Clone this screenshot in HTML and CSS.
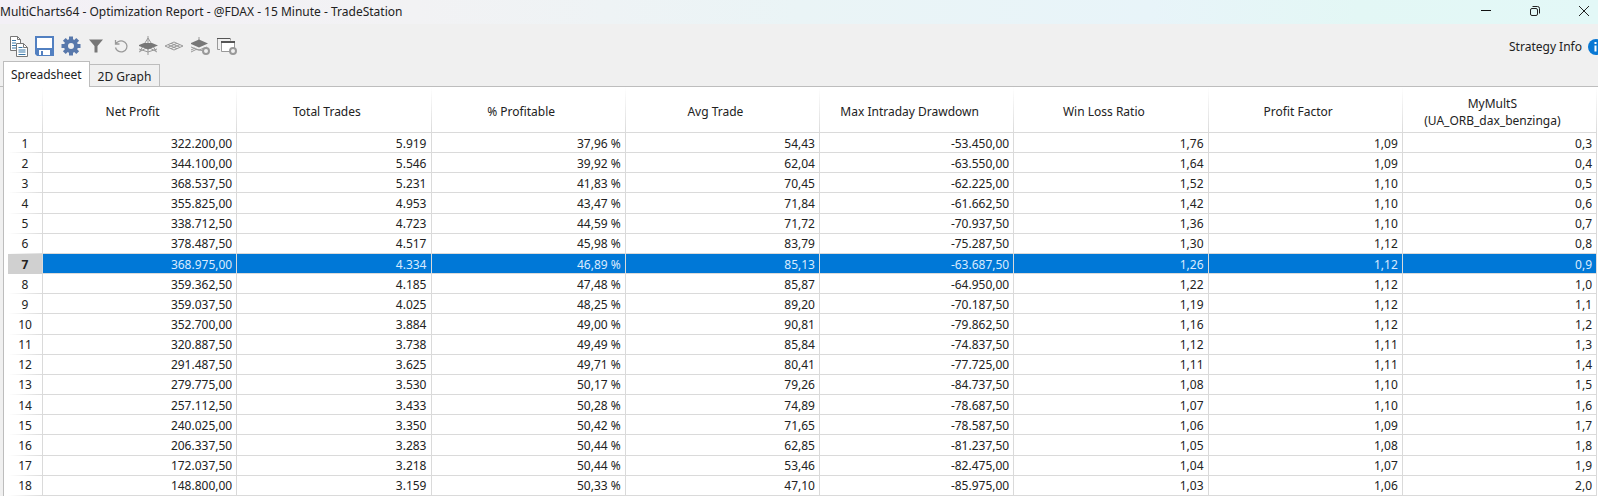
FILE: index.html
```html
<!DOCTYPE html>
<html lang="en">
<head>
<meta charset="utf-8">
<title>Optimization Report</title>
<link rel="stylesheet" href="styles.css">
</head>
<body>
<header class="titlebar">
  <h1 class="title">MultiCharts64 - Optimization Report - @FDAX - 15 Minute - TradeStation</h1>
  <div class="window-buttons">
    <button aria-label="Minimize"><svg width="12" height="12" viewBox="0 0 12 12"><path d="M1 5.500h10" stroke="#111" fill="none"/></svg></button>
    <button aria-label="Restore"><svg width="12" height="12" viewBox="0 0 12 12" fill="none" stroke="#222"><rect x="1.500" y="3.500" width="7" height="7" rx="1.500"/><path d="M3.500 1.500h5a2 2 0 0 1 2 2v5"/></svg></button>
    <button aria-label="Close"><svg width="12" height="12" viewBox="0 0 12 12"><path d="M1 1l10 10M11 1L1 11" stroke="#222" fill="none"/></svg></button>
  </div>
</header>
<div class="toolbar">
  <div class="tools">
    <button aria-label="Copy"><svg width="20" height="22" viewBox="0 0 20 22"><path d="M1.500 1.500h7l3 3v11h-10z" fill="#fff" stroke="#777"/><path d="M8.500 1.500v3h3" fill="none" stroke="#777"/><path d="M3 5.500h4M3 8h4M3 10.500h4M3 13h4" stroke="#3b78a8"/><path d="M7.500 8.500h7l4 4v9h-11z" fill="#fff" stroke="#777"/><path d="M14.500 8.500v4h4" fill="none" stroke="#777"/><path d="M9.500 12.500h4M9.500 15h7M9.500 17h7M9.500 19.500h7" stroke="#3b78a8"/></svg></button>
    <button aria-label="Save"><svg width="20" height="22" viewBox="0 0 20 22"><path d="M0 1h19v20H2l-2-2z" fill="#5280c1"/><path d="M2 3h15v10H2z" fill="#fff"/><path d="M4 15h11v5H4z" fill="#fff"/><path d="M6 16h2v4H6z" fill="#5280c1"/></svg></button>
    <button aria-label="Settings"><svg width="20" height="22" viewBox="-10 -11 20 22"><g stroke="#5878ab" stroke-width="4"><path d="M0-9.500v19M-9.500 0h19M-6.700-6.700l13.400 13.400M6.700-6.700l-13.400 13.400"/></g><circle r="7" fill="#5878ab"/><circle r="3" fill="#f0f0f0"/></svg></button>
    <button aria-label="Filter"><svg width="20" height="22" viewBox="0 0 20 22"><path d="M2 4.500h14l-5.500 6.500v6.500h-3V11z" fill="#777"/></svg></button>
    <button aria-label="Reset"><svg width="20" height="22" viewBox="0 0 20 22"><path d="M2.500 12.500a5.800 5.500 0 1 0 2.500-5.700L2.500 8.500M2.500 5v4h4" fill="none" stroke="#999" stroke-width="1.300"/></svg></button>
    <button aria-label="3D graph"><svg width="20" height="22" viewBox="1 0 20 22" fill="none" stroke="#999"><path d="M10 1v19M10 3L2 16M10 3l8 13M1 14l9 3 9-3M1 17l9-5 9 5"/><path d="M0 10.500l6-2.500h8l6 2.500-10 4z" fill="#777" stroke="none"/></svg></button>
    <button aria-label="Contour graph"><svg width="20" height="22" viewBox="1 0 20 22" fill="none" stroke="#999"><path d="M1 11l9-4 9 4-9 4zM4 12.300l9-4M7 13.600l9-4M4 9.700l9 4M7 8.300l9 4"/></svg></button>
    <button aria-label="3D settings"><svg width="20" height="22" viewBox="2 0 20 22" fill="none" stroke="#999"><path d="M10 2v4M1 17.500l6-3 6 1M2 12l8 3 8-3M2 15l4-2"/><path d="M1 8.500l9-4 9 4-9 4z" fill="#777" stroke="none"/><circle cx="17" cy="16" r="3" fill="#f0f0f0" stroke-width="2"/></svg></button>
    <button aria-label="Window settings"><svg width="20" height="22" viewBox="2 0 20 22" fill="none" stroke="#999"><path d="M5 14.500H2.500V3.500h13v2"/><path d="M2 3.500h13" stroke="#555"/><path d="M6.500 6.500h13v10h-13z" fill="#fff"/><path d="M6 7h14" stroke="#555" stroke-width="2"/><circle cx="18" cy="16" r="3" fill="#f0f0f0" stroke-width="2"/></svg></button>
  </div>
  <button class="info">Strategy Info <svg width="16" height="16" viewBox="0 0 16 16"><circle cx="8" cy="8" r="8" fill="#0878d4"/><path d="M7.500 3v2M7.500 6.500v6" stroke="#fff" stroke-width="2"/></svg></button>
</div>
<nav class="tabs" role="tablist">
  <button class="tab active" role="tab" aria-selected="true">Spreadsheet</button>
  <button class="tab" role="tab" aria-selected="false">2D Graph</button>
</nav>
<main class="sheet">
<table>
<thead><tr><th class="num"></th><th>Net Profit</th><th>Total Trades</th><th>% Profitable</th><th>Avg Trade</th><th>Max Intraday Drawdown</th><th>Win Loss Ratio</th><th>Profit Factor</th><th>MyMultS<br>(UA_ORB_dax_benzinga)</th></tr></thead>
<tbody>
<tr><th>1</th><td>322.200,00</td><td>5.919</td><td>37,96 %</td><td>54,43</td><td>-53.450,00</td><td>1,76</td><td>1,09</td><td>0,3</td></tr>
<tr><th>2</th><td>344.100,00</td><td>5.546</td><td>39,92 %</td><td>62,04</td><td>-63.550,00</td><td>1,64</td><td>1,09</td><td>0,4</td></tr>
<tr><th>3</th><td>368.537,50</td><td>5.231</td><td>41,83 %</td><td>70,45</td><td>-62.225,00</td><td>1,52</td><td>1,10</td><td>0,5</td></tr>
<tr><th>4</th><td>355.825,00</td><td>4.953</td><td>43,47 %</td><td>71,84</td><td>-61.662,50</td><td>1,42</td><td>1,10</td><td>0,6</td></tr>
<tr><th>5</th><td>338.712,50</td><td>4.723</td><td>44,59 %</td><td>71,72</td><td>-70.937,50</td><td>1,36</td><td>1,10</td><td>0,7</td></tr>
<tr><th>6</th><td>378.487,50</td><td>4.517</td><td>45,98 %</td><td>83,79</td><td>-75.287,50</td><td>1,30</td><td>1,12</td><td>0,8</td></tr>
<tr class="selected"><th>7</th><td>368.975,00</td><td>4.334</td><td>46,89 %</td><td>85,13</td><td>-63.687,50</td><td>1,26</td><td>1,12</td><td>0,9</td></tr>
<tr><th>8</th><td>359.362,50</td><td>4.185</td><td>47,48 %</td><td>85,87</td><td>-64.950,00</td><td>1,22</td><td>1,12</td><td>1,0</td></tr>
<tr><th>9</th><td>359.037,50</td><td>4.025</td><td>48,25 %</td><td>89,20</td><td>-70.187,50</td><td>1,19</td><td>1,12</td><td>1,1</td></tr>
<tr><th>10</th><td>352.700,00</td><td>3.884</td><td>49,00 %</td><td>90,81</td><td>-79.862,50</td><td>1,16</td><td>1,12</td><td>1,2</td></tr>
<tr><th>11</th><td>320.887,50</td><td>3.738</td><td>49,49 %</td><td>85,84</td><td>-74.837,50</td><td>1,12</td><td>1,11</td><td>1,3</td></tr>
<tr><th>12</th><td>291.487,50</td><td>3.625</td><td>49,71 %</td><td>80,41</td><td>-77.725,00</td><td>1,11</td><td>1,11</td><td>1,4</td></tr>
<tr><th>13</th><td>279.775,00</td><td>3.530</td><td>50,17 %</td><td>79,26</td><td>-84.737,50</td><td>1,08</td><td>1,10</td><td>1,5</td></tr>
<tr><th>14</th><td>257.112,50</td><td>3.433</td><td>50,28 %</td><td>74,89</td><td>-78.687,50</td><td>1,07</td><td>1,10</td><td>1,6</td></tr>
<tr><th>15</th><td>240.025,00</td><td>3.350</td><td>50,42 %</td><td>71,65</td><td>-78.587,50</td><td>1,06</td><td>1,09</td><td>1,7</td></tr>
<tr><th>16</th><td>206.337,50</td><td>3.283</td><td>50,44 %</td><td>62,85</td><td>-81.237,50</td><td>1,05</td><td>1,08</td><td>1,8</td></tr>
<tr><th>17</th><td>172.037,50</td><td>3.218</td><td>50,44 %</td><td>53,46</td><td>-82.475,00</td><td>1,04</td><td>1,07</td><td>1,9</td></tr>
<tr><th>18</th><td>148.800,00</td><td>3.159</td><td>50,33 %</td><td>47,10</td><td>-85.975,00</td><td>1,03</td><td>1,06</td><td>2,0</td></tr>
</tbody>
</table>
</main>
</body>
</html>
```
FILE: styles.css
```css
* { box-sizing: border-box; }
body {
  margin: 0;
  height: 100vh;
  display: flex;
  flex-direction: column;
  overflow: hidden;
  background: #f0f0f0;
  color: #222;
  font: 12px/17px "Noto Sans", "Open Sans", sans-serif;
}
button {
  font: inherit;
  color: inherit;
  border: 0;
  padding: 0;
  background: none;
}
svg { display: block; }
.titlebar {
  flex: none;
  height: 24px;
  display: flex;
  justify-content: space-between;
  background: linear-gradient(90deg, #f3f0f6, #f2f2f4 26%, #eaf4f6 50%, #e8f4f9 72%, #e3f7f5 85%, #e3f8f7);
}
.title {
  margin: 0;
  font-size: 12px;
  font-weight: 400;
  line-height: 23px;
}
.window-buttons { display: flex; padding-right: 8px; gap: 37px; }
.window-buttons button { height: 22px; }
.toolbar {
  flex: none;
  height: 37px;
  display: flex;
  justify-content: space-between;
  align-items: flex-start;
  padding: 11px 0 0 9px;
}
.tools { display: flex; gap: 6px; }
.info {
  display: flex;
  align-items: center;
  gap: 6px;
  height: 23px;
  margin-right: -6px;
}
.tabs {
  flex: none;
  display: flex;
  align-items: flex-end;
  height: 26px;
  padding-left: 3px;
  box-shadow: inset 0 -1px #bdbdbd;
}
.tab {
  height: 23px;
  padding: 2px 8px 0;
  border: 1px solid #bdbdbd;
  border-left: 0;
}
.tab.active {
  height: 26px;
  padding: 0 7px;
  border-left: 1px solid #bdbdbd;
  border-bottom: 0;
  background: #fff;
}
.sheet {
  flex: 1;
  min-height: 0;
  margin-left: 3px;
  padding: 0 1px 0 4px;
  border-left: 1px solid #bdbdbd;
  background: #fff;
}
table {
  width: 100%;
  height: 100%;
  table-layout: fixed;
  border-collapse: separate;
  border-spacing: 0;
}
th, td {
  padding: 1px 4px 0;
  border-right: 1px solid #dadada;
  border-bottom: 1px solid #dadada;
}
th { font-weight: 400; text-align: center; }
td { text-align: right; }
thead tr { height: 46px; }
thead th {
  padding: 4px 18px 0 4px;
  border-right-color: transparent;
  background: linear-gradient(#fff, #dadada) right / 1px 100% no-repeat border-box;
}
thead .num {
  width: 35px;
  padding: 0;
}
tbody th {
  border-bottom-color: transparent;
  background: linear-gradient(90deg, #fff, #dadada) bottom / 100% 1px no-repeat border-box;
}
.selected td { color: #d8ebff; background: #0078d7; }
.selected th { font-weight: 700; background: #d0d0d0; }
```
